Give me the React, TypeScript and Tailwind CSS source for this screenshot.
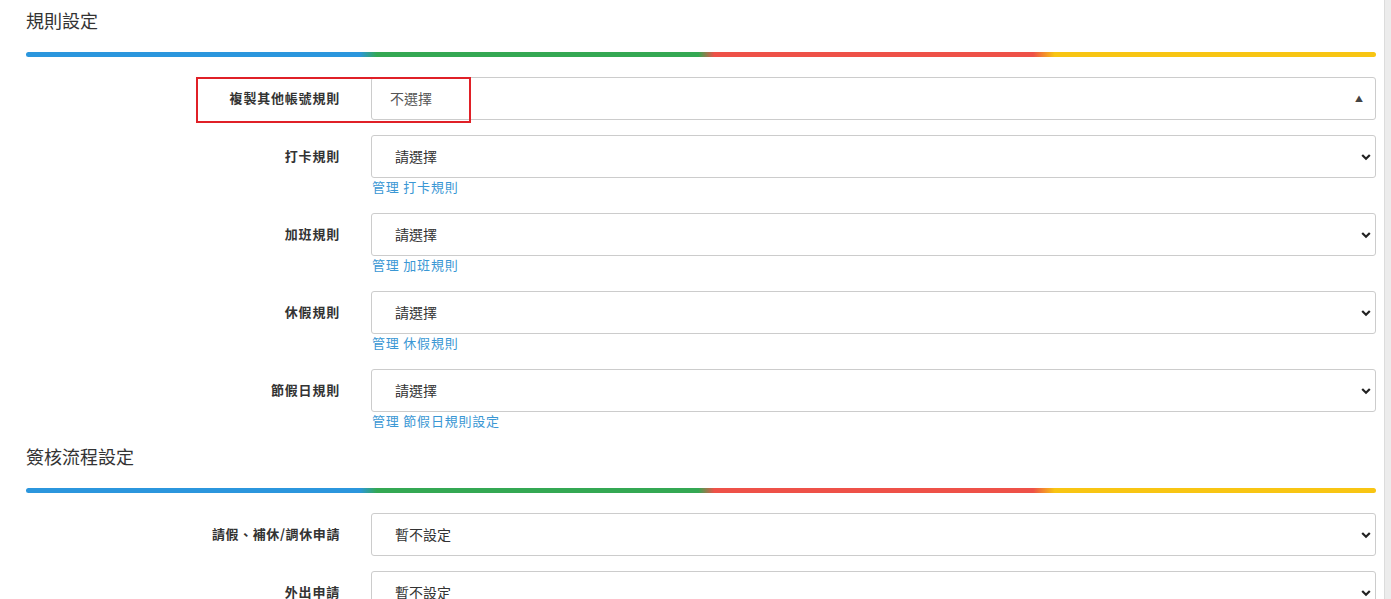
import React from 'react';

const font = "font-['Noto_Sans_CJK_TC','Liberation_Sans',sans-serif]";

const Chevron = () => (
  <svg
    className="pointer-events-none absolute right-[4px] top-1/2 -translate-y-1/2"
    width="10"
    height="8"
    viewBox="0 0 10 8"
  >
    <path d="M1.2 2 L5 5.8 L8.8 2" fill="none" stroke="#222" strokeWidth="2.2" strokeLinejoin="miter" />
  </svg>
);

const SectionBar = () => (
  <div className="h-[5px] w-full rounded-full bg-[linear-gradient(to_right,#2b96dd_0%,#2b96dd_24.7%,#34a853_26%,#34a853_49.8%,#ee5148_51%,#ee5148_74.6%,#f8c513_76.2%,#f8c513_100%)]" />
);

const SectionTitle = ({ title }: { title: string }) => (
  <div className="pt-[7px]">
    <h2 className="text-[18px] leading-[26px] text-[#333]">{title}</h2>
    <div className="mt-[19px]">
      <SectionBar />
    </div>
  </div>
);

const labelCls =
  'w-[314px] shrink-0 pt-[11px] text-right text-[13px] font-semibold leading-[20px] text-[#333]';

type RowProps = {
  label: string;
  value: string;
  link?: string;
  tight?: boolean;
};

const SelectRow = ({ label, value, link, tight }: RowProps) => (
  <div className="flex items-start">
    <label className={`${labelCls} ${tight ? 'tracking-[0.6px]' : 'tracking-[0.8px]'}`}>{label}</label>
    <div className="ml-[31px] flex-1">
      <div className="relative h-[43px] rounded-[3px] border border-[#ccc] bg-white">
        <div className="flex h-full items-center pl-[23px] text-[14px] text-[#333]">{value}</div>
        <Chevron />
      </div>
      {link && (
        <a className="mb-[2px] block pl-[1px] text-[13px] leading-[18px] tracking-[0.8px] text-[#3a97d4]" href="#">
          管理 {link}
        </a>
      )}
    </div>
  </div>
);

const App = () => {
  return (
    <div className={`flex h-[599px] w-full overflow-hidden bg-white ${font}`}>
      <div className="flex-1 pl-[26px] pr-[8px]">
        <SectionTitle title="規則設定" />

        <div className="mt-[20px] flex flex-col gap-[15px]">
          <div className="relative flex items-start">
            <label className={`${labelCls} tracking-[0.8px]`}>複製其他帳號規則</label>
            <div className="ml-[31px] flex-1">
              <div className="relative h-[43px] rounded-[3px] border border-[#ccc] bg-white">
                <div className="flex h-full items-center pl-[18px] text-[14px] text-[#555]">不選擇</div>
                <span className="pointer-events-none absolute right-[12px] top-1/2 -translate-y-1/2 text-[8px] leading-none text-[#444]">
                  ▲
                </span>
              </div>
            </div>
            <div className="pointer-events-none absolute left-[170px] top-0 h-[46px] w-[275px] border-2 border-[#e02027]" />
          </div>

          <SelectRow label="打卡規則" value="請選擇" link="打卡規則" />
          <SelectRow label="加班規則" value="請選擇" link="加班規則" />
          <SelectRow label="休假規則" value="請選擇" link="休假規則" />
          <SelectRow label="節假日規則" value="請選擇" link="節假日規則設定" />
        </div>

        <div className="mt-[4px]">
          <SectionTitle title="簽核流程設定" />
        </div>

        <div className="mt-[20px] flex flex-col gap-[15px]">
          <SelectRow label="請假、補休/調休申請" value="暫不設定" tight />
          <SelectRow label="外出申請" value="暫不設定" />
        </div>
      </div>
      <div className="w-[7px] shrink-0 border-l border-[#dcdcdc] bg-[#ececec]" />
    </div>
  );
};

export default App;
